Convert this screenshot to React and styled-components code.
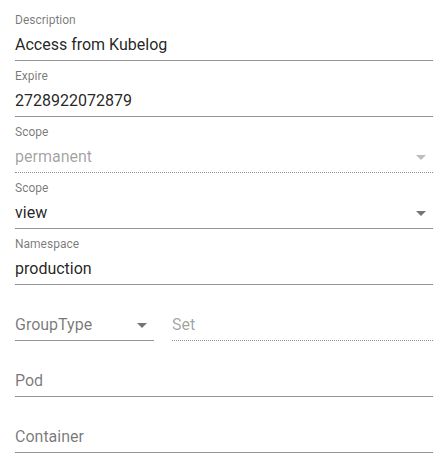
import React from 'react'
import { styled, createGlobalStyle } from 'styled-components'

const GlobalStyle = createGlobalStyle`
  body {
    margin: 0;
    background: #ffffff;
    font-family: Roboto, "Liberation Sans", sans-serif;
  }
`

function ArrowDrop({ disabled }) {
  return (
    <StyledArrow viewBox="0 0 24 24" $disabled={disabled}>
      <path d="M7 10l5 5 5-5z" />
    </StyledArrow>
  )
}

function Field({ label, value, disabled, select, width }) {
  const hasValue = value !== undefined && value !== ''
  return (
    <StyledField $width={width}>
      <StyledLabelRow>
        {hasValue && <StyledSmallLabel>{label}</StyledSmallLabel>}
      </StyledLabelRow>
      <StyledInputBox $disabled={disabled}>
        <StyledValue $disabled={disabled} $placeholder={!hasValue}>
          {hasValue ? value : label}
        </StyledValue>
        {select && <ArrowDrop disabled={disabled} />}
      </StyledInputBox>
    </StyledField>
  )
}

export default function App() {
  return (
    <>
      <GlobalStyle />
      <StyledForm>
        <Field label="Description" value="Access from Kubelog" />
        <Field label="Expire" value="2728922072879" />
        <Field label="Scope" value="permanent" disabled select />
        <Field label="Scope" value="view" select />
        <Field label="Namespace" value="production" />
        <StyledRow>
          <Field label="GroupType" select width="139px" />
          <Field label="Set" disabled />
        </StyledRow>
        <Field label="Pod" />
        <Field label="Container" />
      </StyledForm>
    </>
  )
}

const StyledForm = styled.div`
display: flex;
flex-direction: column;
gap: 8px;
padding: 13px 9px 0 15px;
`

const StyledRow = styled.div`
display: flex;
gap: 18px;
`

const StyledField = styled.div`
display: flex;
flex-direction: column;
height: 48px;
flex: ${p => (p.$width ? `0 0 ${p.$width}` : '1 1 auto')};
min-width: 0;
`

const StyledLabelRow = styled.div`
height: 16px;
`

const StyledSmallLabel = styled.div`
padding-top: 1px;
font-size: 12px;
line-height: 12px;
color: rgba(0, 0, 0, 0.54);
`

const StyledInputBox = styled.div`
display: flex;
align-items: center;
height: 32px;
box-sizing: border-box;
border-bottom: 1px ${p => (p.$disabled ? 'dotted' : 'solid')} rgba(0, 0, 0, 0.42);
`

const StyledValue = styled.div`
flex: 1 1 auto;
font-size: 16px;
line-height: 19px;
white-space: nowrap;
color: ${p =>
  p.$disabled ? 'rgba(0, 0, 0, 0.38)' : p.$placeholder ? 'rgba(0, 0, 0, 0.54)' : 'rgba(0, 0, 0, 0.87)'};
`

const StyledArrow = styled.svg`
flex: 0 0 24px;
width: 24px;
height: 24px;
margin-top: 1px;
fill: ${p => (p.$disabled ? 'rgba(0, 0, 0, 0.26)' : 'rgba(0, 0, 0, 0.54)')};
`
